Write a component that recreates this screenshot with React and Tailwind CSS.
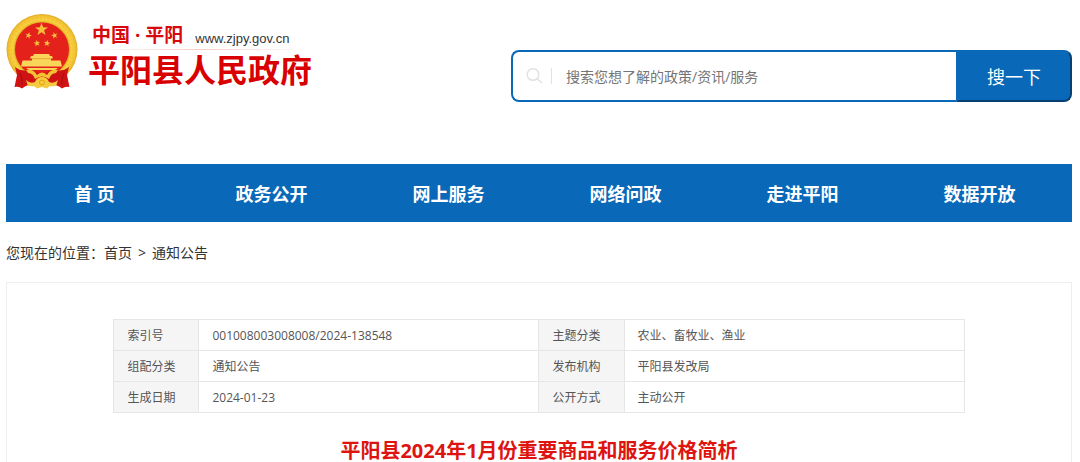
import { useState } from "react";

const navItems = ["首 页", "政务公开", "网上服务", "网络问政", "走进平阳", "数据开放"];

const infoRows = [
    ["索引号", "001008003008008/2024-138548", "主题分类", "农业、畜牧业、渔业"],
    ["组配分类", "通知公告", "发布机构", "平阳县发改局"],
    ["生成日期", "2024-01-23", "公开方式", "主动公开"],
];

const STAR = "M0 -10 L2.4 -3.2 L9.5 -3.1 L3.8 1.2 L5.9 8.1 L0 4 L-5.9 8.1 L-3.8 1.2 L-9.5 -3.1 L-2.4 -3.2 Z";

const Emblem = () => (
    <svg viewBox="7 13 72 76" className="h-19 w-18 shrink-0" aria-hidden="true">
        <defs>
            <radialGradient id="gold" cx="50%" cy="50%" r="50%">
                <stop offset="74%" stopColor="#d99a10" />
                <stop offset="82%" stopColor="#f8d243" />
                <stop offset="94%" stopColor="#f3c232" />
                <stop offset="100%" stopColor="#e0a826" />
            </radialGradient>
        </defs>
        <circle cx="43" cy="49.500" r="35.500" fill="url(#gold)" />
        <circle cx="43" cy="49.500" r="31" fill="none" stroke="#e0a01c" strokeWidth="5" strokeDasharray="1 3" opacity="0.15" />
        <circle cx="43" cy="49.500" r="27" fill="#e5211b" />
        <g fill="#f3c03c">
            <path d={STAR} transform="translate(42.500 29.500) scale(0.680)" />
            <path d={STAR} transform="translate(29.500 35.500) rotate(15) scale(0.350)" />
            <path d={STAR} transform="translate(38 43.300) rotate(-8) scale(0.350)" />
            <path d={STAR} transform="translate(48 43.300) rotate(8) scale(0.350)" />
            <path d={STAR} transform="translate(55.500 35.500) rotate(-15) scale(0.350)" />
        </g>
        {/* gate tower */}
        <g fill="#f9d55a">
            <path d="M35 54 H50 L51 56 H53 L54 58.500 H52 V60.500 H61.500 L63 66.500 H22 L23.500 60.500 H33 V58.500 H31 L32 56 H34 Z" />
            <path d="M27 68 H59 L56 70 H30 Z" />
        </g>
        <path d="M33 58.700 H52" stroke="#e5851b" strokeWidth="0.600" />
        {/* ribbons on both sides of the cogwheel */}
        <path d="M16 67 Q22 72 31 70 Q38 71 43 76 Q48 71 55 70 Q64 72 70 67 L68 75 L70.500 87 Q66 86 63 88.500 Q57 84 52 84 H34 Q29 84 23 88.500 Q20 86 15.500 87 L18 75 Z" fill="#cf1315" />
        <path d="M21 73 Q24 79 23 85 M65 73 Q62 79 63 85" fill="none" stroke="#a90c10" strokeWidth="1" />
        <path d="M27 70 Q35 69 38 75 Q43 70 48 75 Q51 69 59 70 L57 73 Q52 73 50 79 Q43 74 36 79 Q34 73 29 73 Z" fill="#f3c232" />
        <path d="M27 80 Q31 84 36 82 Q38 77 43 77 Q48 77 50 82 Q55 84 59 80 L57 86 L50 86.500 L48 88.500 L43 87 L38 88.500 L36 86.500 L29 86 Z" fill="#f5ca3c" />
        <circle cx="43" cy="82.500" r="2.500" fill="none" stroke="#d99a10" strokeWidth="0.800" />
    </svg>
);

const Logo = () => (
    <a href="#" className="flex items-start gap-2.5">
        <Emblem />
        <div className="flex flex-col pt-2">
            <div className="flex items-center gap-3 pl-1">
                <span className="text-[19px] leading-6 font-bold text-[#d7090c]">中国 · 平阳</span>
                <span className="pt-2 font-['Liberation_Sans'] text-[13px] leading-5 text-[#333]">www.zjpy.gov.cn</span>
            </div>
            <div className="h-px bg-linear-to-r from-[#ffffff] via-[#f9cdc6] to-[#ffffff]"></div>
            <span className="text-[32px] leading-10 font-bold text-[#d80000]">平阳县人民政府</span>
        </div>
    </a>
);

const SearchBar = () => {
    const [keyword, setKeyword] = useState("");

    return (
        <form onSubmit={(e) => e.preventDefault()} className="flex h-13 w-full max-w-[561px]">
            <div className="flex flex-1 items-center rounded-l-lg border-2 border-r-0 border-[#0968b8] pl-3">
                <svg viewBox="0 0 18 18" className="size-[18px] shrink-0" fill="none" stroke="#e2e2e2" strokeWidth="1.500" aria-hidden="true">
                    <circle cx="8" cy="7.500" r="5.800" />
                    <path d="M12.200 11.700 L17 16" />
                </svg>
                <div className="ml-2 h-4 w-px bg-[#e2e2e2]"></div>
                <input
                    type="text"
                    aria-label="搜索"
                    value={keyword}
                    onChange={(e) => setKeyword(e.target.value)}
                    className="min-w-0 flex-1 px-3.5 pt-0.5 text-sm text-[#333] outline-none placeholder:text-[#757575]"
                    placeholder="搜索您想了解的政策/资讯/服务"
                />
            </div>
            <button type="submit" className="w-29 rounded-r-lg border-2 border-t-[#0968b8] border-r-[#063f70] border-b-[#063f70] border-l-[#0968b8] bg-[#0968b8] pt-0.5 text-lg text-white">
                搜一下
            </button>
        </form>
    );
};

const App = () => {
    return (
        <div className="bg-white pr-2 pl-1.5 font-['Open_Sans','Noto_Sans_CJK_SC',sans-serif] text-[#333]">
            <header className="flex h-41 items-start justify-between gap-8">
                <div className="shrink-0 pt-[13px]">
                    <Logo />
                </div>
                <div className="flex flex-1 justify-end pt-[50px]">
                    <SearchBar />
                </div>
            </header>

            <nav className="grid h-[58px] grid-cols-6 items-center bg-[#0968b8] pt-0.5 pr-1">
                {navItems.map((item) => (
                    <a key={item} href="#" className="text-center text-lg font-bold text-white">{item}</a>
                ))}
            </nav>

            <div className="flex h-15 items-center pt-0.5 text-sm">
                <span>您现在的位置：</span>
                <a href="#">首页</a>
                <span className="px-1.5">&gt;</span>
                <a href="#">通知公告</a>
            </div>

            <main className="border border-b-0 border-[#eee] pt-9">
                <table className="mx-auto w-4/5 table-fixed border-collapse text-xs text-[#555]">
                    <tbody>
                        {infoRows.map((row) => (
                            <tr key={row[0]} className="h-[31px]">
                                <th scope="row" className="w-1/10 border border-[#e6e6e6] bg-[#f5f5f5] px-[13px] pt-0.5 text-left font-normal">{row[0]}</th>
                                <td className="w-2/5 border border-[#e6e6e6] px-[13px] pt-0.5">{row[1]}</td>
                                <th scope="row" className="w-1/10 border border-[#e6e6e6] bg-[#f5f5f5] px-[13px] pt-0.5 text-left font-normal">{row[2]}</th>
                                <td className="w-2/5 border border-[#e6e6e6] px-[13px] pt-0.5">{row[3]}</td>
                            </tr>
                        ))}
                    </tbody>
                </table>
                <h1 className="pt-[26px] text-center text-xl leading-6 font-bold text-[#dd1410]">平阳县2024年1月份重要商品和服务价格简析</h1>
            </main>
        </div>
    );
};

export default App;
